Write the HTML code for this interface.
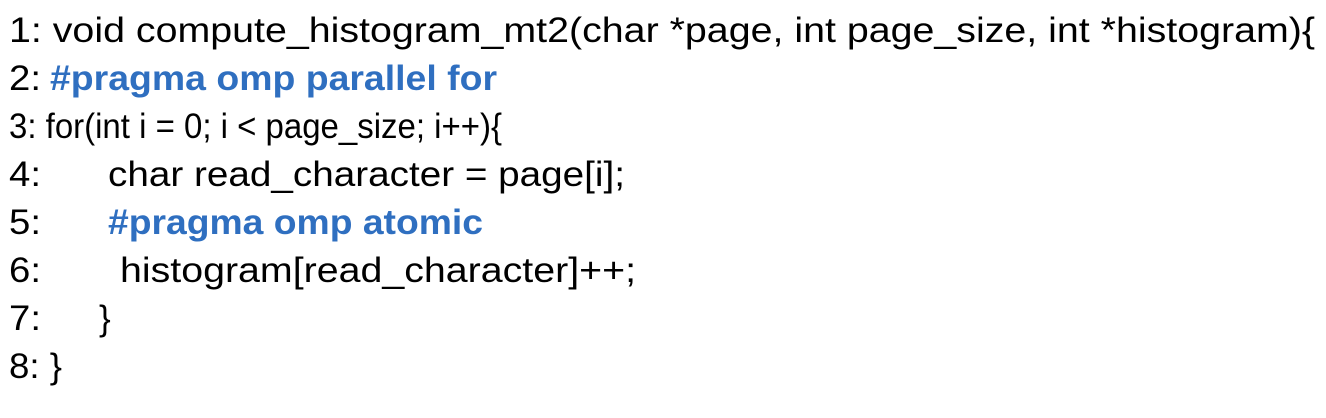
<!DOCTYPE html>
<html><head><style>
html,body{margin:0;padding:0;background:#fff;width:1326px;height:418px;overflow:hidden}
svg{display:block}
text{font-family:"Liberation Sans",sans-serif;font-size:35px;fill:#000}
.b{fill:#2f6fc0;font-weight:bold}
</style></head><body>
<svg width="1326" height="418" viewBox="0 0 1326 418" xmlns="http://www.w3.org/2000/svg">
<text x="9" y="42" textLength="1306" lengthAdjust="spacingAndGlyphs">1: void compute_histogram_mt2(char *page, int page_size, int *histogram){</text>
<text x="9" y="90" textLength="32" lengthAdjust="spacingAndGlyphs">2:</text>
<text x="50" y="90" class="b" textLength="447" lengthAdjust="spacingAndGlyphs">#pragma omp parallel for</text>
<text x="9" y="138" textLength="493" lengthAdjust="spacingAndGlyphs">3: for(int i = 0; i &lt; page_size; i++){</text>
<text x="9" y="186" textLength="32" lengthAdjust="spacingAndGlyphs">4:</text>
<text x="108" y="186" textLength="517" lengthAdjust="spacingAndGlyphs">char read_character = page[i];</text>
<text x="9" y="234" textLength="32" lengthAdjust="spacingAndGlyphs">5:</text>
<text x="108" y="234" class="b" textLength="375" lengthAdjust="spacingAndGlyphs">#pragma omp atomic</text>
<text x="9" y="282" textLength="32" lengthAdjust="spacingAndGlyphs">6:</text>
<text x="120" y="282" textLength="516" lengthAdjust="spacingAndGlyphs">histogram[read_character]++;</text>
<text x="9" y="330" textLength="32" lengthAdjust="spacingAndGlyphs">7:</text>
<text x="99" y="330">}</text>
<text x="9" y="378" textLength="53" lengthAdjust="spacingAndGlyphs">8: }</text>
</svg>
</body></html>
